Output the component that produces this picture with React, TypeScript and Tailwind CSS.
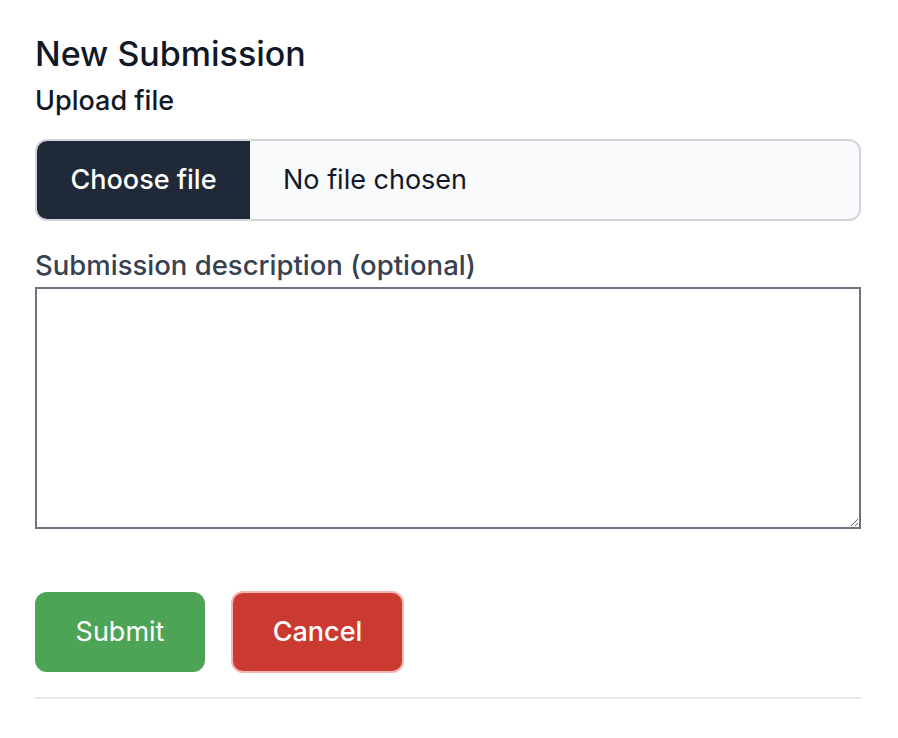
export default function App() {
  return (
    <div className="min-h-screen bg-white px-[35px] pt-[32px] font-['Inter',sans-serif] text-[#111827]">
      <div className="w-[826px]">
        <h1 className="text-[34px] leading-[44px] font-medium">New Submission</h1>
        <label className="mt-[8px] block text-[27px] leading-[34px] font-medium">Upload file</label>

        {/* file input */}
        <div className="mt-[21px] flex h-[82px] overflow-hidden rounded-[12px] border-2 border-[#d1d5db] bg-[#f9fafb]">
          <div className="flex w-[213px] items-center justify-center bg-[#1f2937] text-[27px] font-medium text-white">
            Choose file
          </div>
          <div className="flex items-center pl-[33px] text-[27px] text-[#111827]">No file chosen</div>
        </div>

        <label className="mt-[27px] block text-[27.5px] leading-[34px] font-medium text-[#374151]">
          Submission description (optional)
        </label>
        <textarea className="mt-[5px] block h-[242px] w-full resize-y border-2 border-[#6b7280] bg-white" />

        <div className="mt-[63px] flex gap-[26px]">
          <button className="h-[80px] w-[170px] rounded-[12px] bg-[#4ea456] text-[27px] text-white">
            Submit
          </button>
          <button className="-mt-[1px] h-[82px] w-[173px] rounded-[12px] border-2 border-[#f3b6b2] bg-[#cb3a31] text-[27px] font-medium text-white">
            Cancel
          </button>
        </div>

        <hr className="mt-[24px] border-t-2 border-[#e5e7eb]" />
      </div>
    </div>
  );
}
